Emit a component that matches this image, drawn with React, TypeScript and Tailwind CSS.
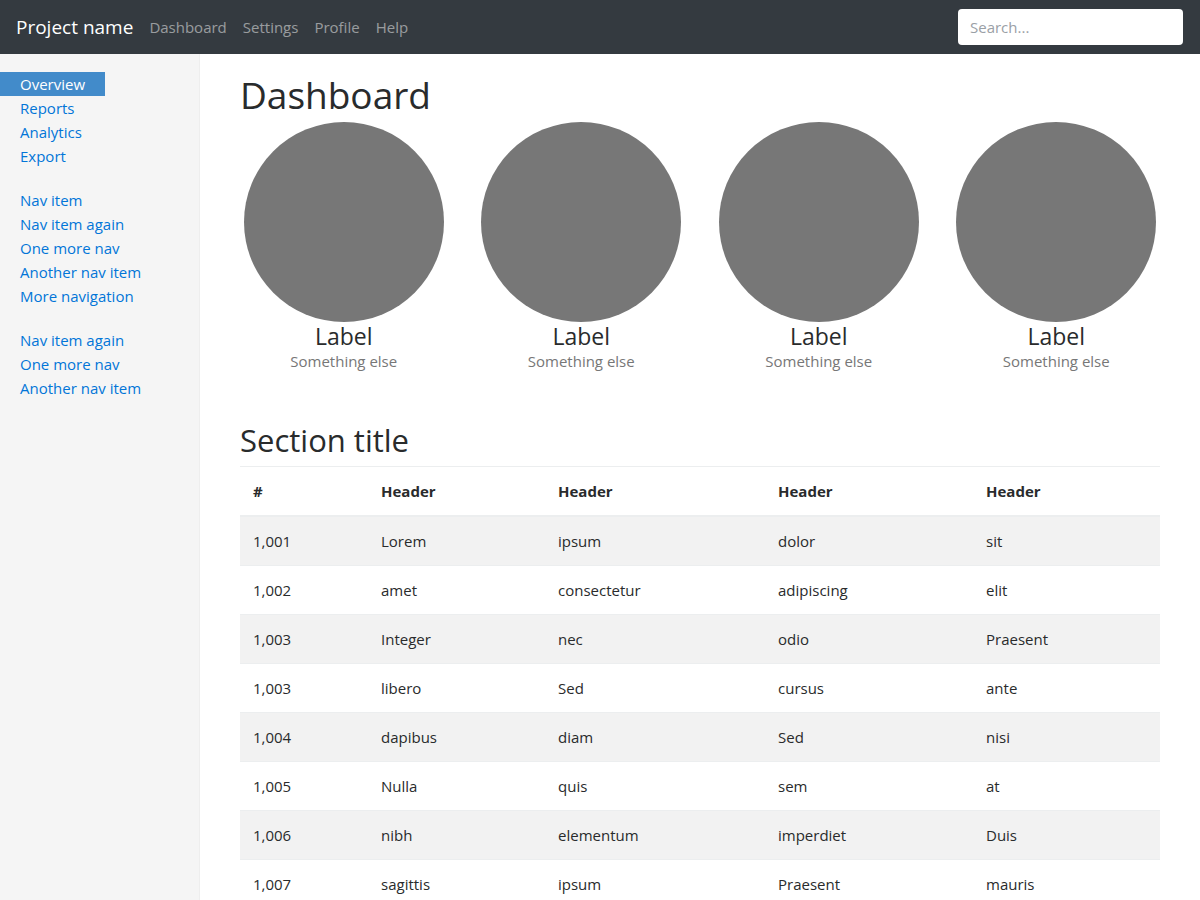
const navGroups = [
  ['Overview', 'Reports', 'Analytics', 'Export'],
  ['Nav item', 'Nav item again', 'One more nav', 'Another nav item', 'More navigation'],
  ['Nav item again', 'One more nav', 'Another nav item'],
];

const rows = [
  ['1,001', 'Lorem', 'ipsum', 'dolor', 'sit'],
  ['1,002', 'amet', 'consectetur', 'adipiscing', 'elit'],
  ['1,003', 'Integer', 'nec', 'odio', 'Praesent'],
  ['1,003', 'libero', 'Sed', 'cursus', 'ante'],
  ['1,004', 'dapibus', 'diam', 'Sed', 'nisi'],
  ['1,005', 'Nulla', 'quis', 'sem', 'at'],
  ['1,006', 'nibh', 'elementum', 'imperdiet', 'Duis'],
  ['1,007', 'sagittis', 'ipsum', 'Praesent', 'mauris'],
];

const colWidths = ['w-[128px]', 'w-[177px]', 'w-[220px]', 'w-[208px]', ''];

export default function App() {
  return (
    <div className="min-h-[900px] bg-white text-[#292b2c] font-['Segoe_UI','Open_Sans',sans-serif] text-[15px]">
      <nav className="h-[54px] bg-[#343a40] flex items-center px-4">
        <span className="text-white text-[19px] mr-2 pt-[1px]">Project name</span>
        <div className="flex pt-[1px]">
          {['Dashboard', 'Settings', 'Profile', 'Help'].map((l) => (
            <a key={l} className="px-2 text-white/50">
              {l}
            </a>
          ))}
        </div>
        <input
          placeholder="Search..."
          className="ml-auto mr-[1px] w-[225px] h-9 rounded bg-white px-3 text-[15px] placeholder:text-[#9aa0a6] outline-none"
        />
      </nav>

      <div className="flex">
        <aside className="w-[200px] shrink-0 min-h-[846px] bg-[#f5f5f5] border-r border-[#eeeeee] pt-[18px]">
          {navGroups.map((group, gi) => (
            <ul key={gi} className="mb-5">
              {group.map((item, i) => (
                <li key={i} className="leading-6">
                  <a
                    className={
                      gi === 0 && i === 0
                        ? 'inline-block px-5 bg-[#428bca] text-white'
                        : 'inline-block px-5 text-[#0275d8]'
                    }
                  >
                    {item}
                  </a>
                </li>
              ))}
            </ul>
          ))}
        </aside>

        <main className="flex-1 pl-10 pr-10 pt-4">
          <h1 className="text-[37px] leading-[44px] pt-[3px] text-[#292b2c]">Dashboard</h1>
          <div className="-mx-[15px] grid grid-cols-4 mt-[5px]">
            {[0, 1, 2, 3].map((i) => (
              <div key={i} className="flex flex-col items-center">
                <div className="w-[200px] h-[200px] rounded-full bg-[#777777]" />
                <h4 className="text-[23px] leading-[26px] pt-[1px]">Label</h4>
                <span className="text-[#777] leading-6">Something else</span>
              </div>
            ))}
          </div>

          <h2 className="mt-[48px] text-[31px] leading-[35px] mb-2 pt-[2px]">Section title</h2>
          <table className="w-full table-fixed border-collapse">
            <thead>
              <tr className="border-t border-[#eceeef] border-b-2">
                {['#', 'Header', 'Header', 'Header', 'Header'].map((h, i) => (
                  <th key={i} className={`${colWidths[i]} text-left font-bold pl-[13px] pr-3 py-3 leading-6`}>
                    {h}
                  </th>
                ))}
              </tr>
            </thead>
            <tbody>
              {rows.map((r, ri) => (
                <tr key={ri} className={`border-t border-[#eceeef] ${ri % 2 === 0 ? 'bg-[#f2f2f2]' : ''}`}>
                  {r.map((c, ci) => (
                    <td key={ci} className="pl-[13px] pr-3 py-3 leading-6">
                      {c}
                    </td>
                  ))}
                </tr>
              ))}
            </tbody>
          </table>
        </main>
      </div>
    </div>
  );
}
